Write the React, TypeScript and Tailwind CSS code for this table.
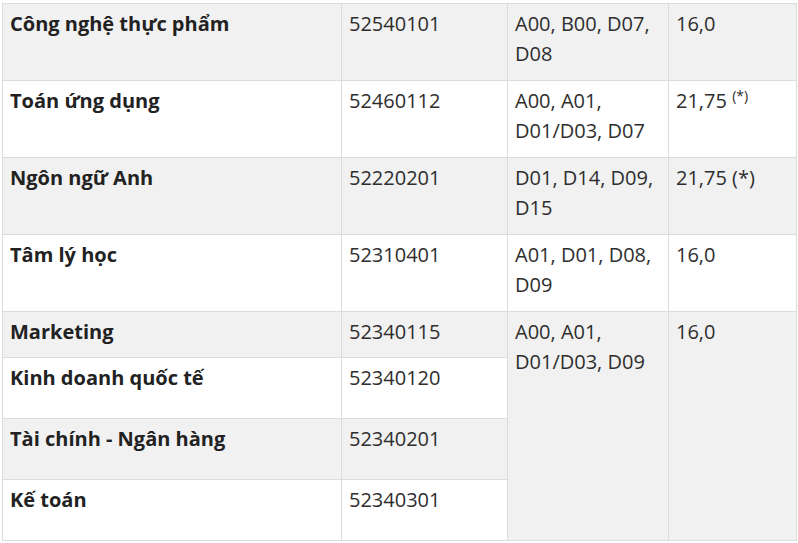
import React from 'react'

type Row = {
  name: string
  code: string
  groups?: string
  score?: React.ReactNode
  h: string
}

const ROWS: Row[] = [
  { name: 'Công nghệ thực phẩm', code: '52540101', groups: 'A00, B00, D07, D08', score: '16,0', h: 'h-[77px]' },
  {
    name: 'Toán ứng dụng',
    code: '52460112',
    groups: 'A00, A01, D01/D03, D07',
    score: (
      <>
        21,75 <sup className="text-[14px]">(*)</sup>
      </>
    ),
    h: 'h-[77px]',
  },
  { name: 'Ngôn ngữ Anh', code: '52220201', groups: 'D01, D14, D09, D15', score: '21,75 (*)', h: 'h-[77px]' },
  { name: 'Tâm lý học', code: '52310401', groups: 'A01, D01, D08, D09', score: '16,0', h: 'h-[77px]' },
  { name: 'Marketing', code: '52340115', h: 'h-[46px]' },
  { name: 'Kinh doanh quốc tế', code: '52340120', h: 'h-[61px]' },
  { name: 'Tài chính - Ngân hàng', code: '52340201', h: 'h-[61px]' },
  { name: 'Kế toán', code: '52340301', h: 'h-[61px]' },
]

const cell = 'border border-[#dcdcdc] align-top pl-[7px] pr-2 pt-[5px] pb-0'

export default function App() {
  return (
    <div
      className="w-[798px] h-[543px] overflow-hidden bg-white pl-[2px] pt-[3px] text-[20px] leading-[30px] text-[#2e2e2e]"
      style={{ fontFamily: '"Open Sans", "Noto Sans", sans-serif' }}
    >
      <table className="border-collapse w-[794px] table-fixed">
        <colgroup>
          <col className="w-[339px]" />
          <col className="w-[166px]" />
          <col className="w-[161px]" />
          <col className="w-[128px]" />
        </colgroup>
        <tbody>
          {ROWS.map((r, i) => (
            <tr key={r.code} className={`${r.h} ${i % 2 === 0 ? 'bg-[#f1f1f1]' : 'bg-white'}`}>
              <td className={`${cell} font-bold text-[#222]`}>{r.name}</td>
              <td className={cell}>{r.code}</td>
              {r.groups && <td className={cell}>{r.groups}</td>}
              {r.groups && <td className={cell}>{r.score}</td>}
              {i === 4 && (
                <>
                  <td rowSpan={4} className={`${cell} bg-[#f1f1f1]`}>
                    A00, A01, D01/D03, D09
                  </td>
                  <td rowSpan={4} className={`${cell} bg-[#f1f1f1]`}>
                    16,0
                  </td>
                </>
              )}
            </tr>
          ))}
        </tbody>
      </table>
    </div>
  )
}
